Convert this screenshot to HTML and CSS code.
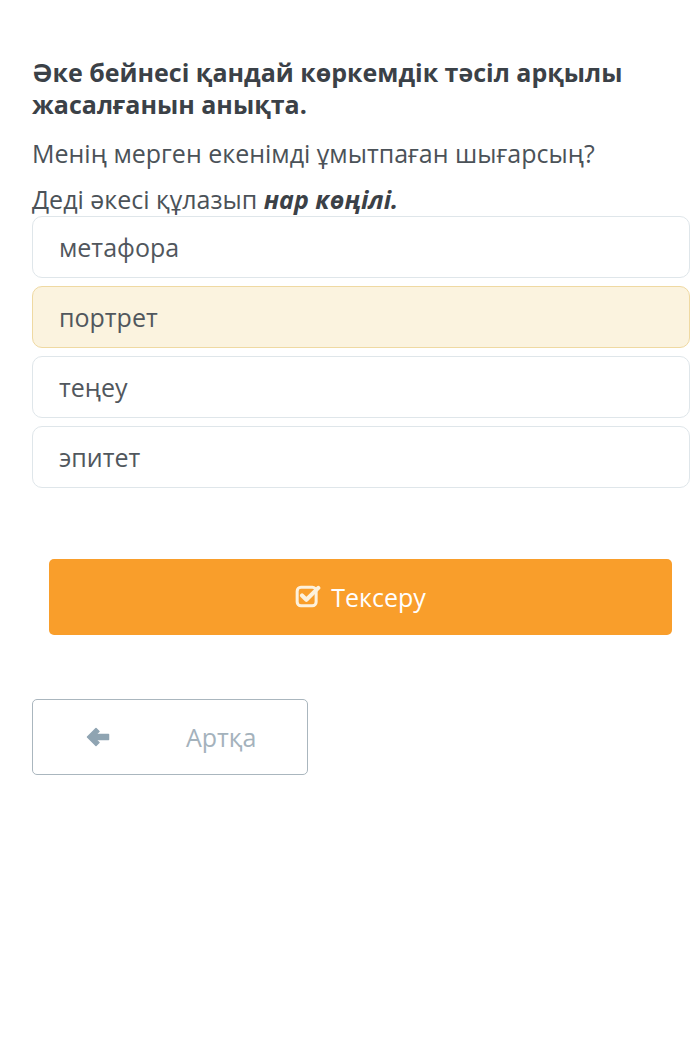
FILE: index.html
```html
<!DOCTYPE html>
<html lang="kk">
<head>
<meta charset="utf-8">
<link rel="stylesheet" href="styles.css">
</head>
<body>
<main class="quiz">
  <h1 class="question">Әке бейнесі қандай көркемдік тәсіл арқылы жасалғанын анықта.</h1>
  <p class="line first">Менің мерген екенімді ұмытпаған шығарсың?</p>
  <p class="line">Деді әкесі құлазып <b><i>нар көңілі.</i></b></p>
  <ul class="options">
    <li class="option">метафора</li>
    <li class="option selected">портрет</li>
    <li class="option">теңеу</li>
    <li class="option">эпитет</li>
  </ul>
  <div class="check-wrap">
    <button class="check">
      <svg class="check-icon" viewBox="0 0 24 24" width="26" height="26" aria-hidden="true">
        <rect x="2" y="4" width="17.5" height="17" rx="3.5" fill="none" stroke="#fdf1dc" stroke-width="2.8"/>
        <path d="M6.5 11.5 L10.5 15.5 L21.5 4.5" fill="none" stroke="#fdf1dc" stroke-width="3.8" stroke-linecap="round" stroke-linejoin="round"/>
      </svg>
      <span>Тексеру</span>
    </button>
  </div>
  <button class="back">
    <svg class="back-icon" viewBox="0 0 26 22" width="26" height="22" aria-hidden="true">
      <path d="M11 2.5 L2.5 11 L11 19.5 L14 16.5 L10.5 13.5 L23.5 13.5 L23.5 8.5 L10.5 8.5 L14 5.5 Z" fill="#8fa4b2" stroke="#8fa4b2" stroke-width="1.5" stroke-linejoin="round"/>
    </svg>
    <span>Артқа</span>
  </button>
</main>
</body>
</html>
```

FILE: styles.css
```css
html, body {
  margin: 0;
  padding: 0;
  background: #fff;
}

body {
  font-family: "Open Sans", "Noto Sans", sans-serif;
  color: #4b5258;
  width: 692px;
  overflow: hidden;
}

.quiz {
  padding: 56px 2px 0 32px;
}

.question {
  margin: 0;
  font-size: 25px;
  line-height: 32px;
  font-weight: 700;
  color: #3b4147;
}

.line {
  margin: 14px 0 0;
  font-size: 25px;
  line-height: 32px;
  color: #4b5258;
}

.line.first {
  margin-top: 17px;
}

.line b {
  color: #3b4147;
}

.options {
  list-style: none;
  margin: 1px 0 0;
  padding: 0;
  display: flex;
  flex-direction: column;
  gap: 8px;
}

.option {
  border: 1px solid #dfe6ea;
  border-radius: 10px;
  padding: 14px 26px;
  font-size: 25px;
  line-height: 32px;
  color: #51575d;
  background: #fff;
}

.option.selected {
  background: #fbf3df;
  border-color: #efd9a2;
}

.check-wrap {
  padding: 71px 18px 0 17px;
}

.check {
  width: 100%;
  height: 76px;
  border: none;
  border-radius: 5px;
  background: #f99e2b;
  color: #fff;
  font-family: inherit;
  font-size: 25px;
  display: flex;
  align-items: center;
  justify-content: center;
  gap: 10px;
  padding: 0;
}

.check-icon {
  display: block;
  margin-top: -3px;
}

.back {
  margin-top: 64px;
  width: 276px;
  height: 76px;
  border: 1px solid #aab6be;
  border-radius: 5px;
  background: #fff;
  color: #a4b2bc;
  font-family: inherit;
  font-size: 25px;
  display: flex;
  align-items: center;
  padding: 0 0 0 52px;
  gap: 75px;
}

.back-icon {
  display: block;
}
```
